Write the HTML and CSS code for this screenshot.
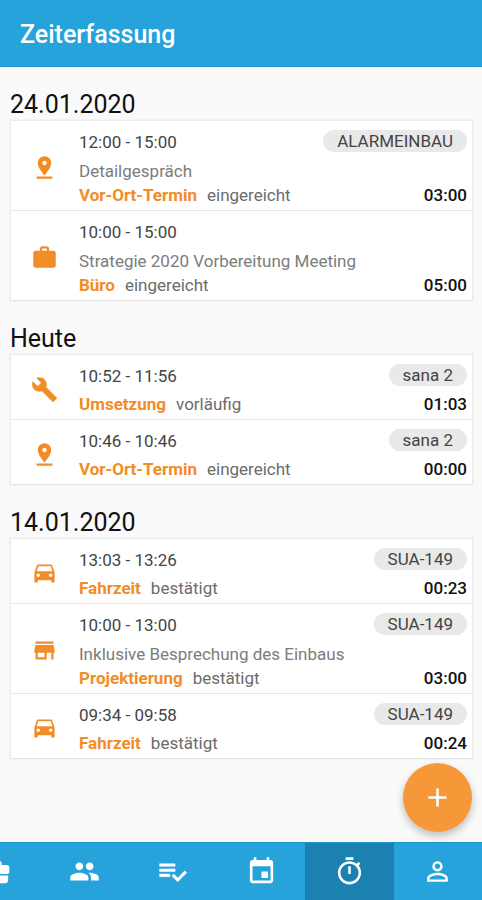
FILE: index.html
```html
<!DOCTYPE html>
<html lang="de">
<head>
<meta charset="utf-8">
<meta name="viewport" content="width=device-width, initial-scale=1">
<title>Zeiterfassung</title>
<link rel="stylesheet" href="styles.css">
</head>
<body>
<svg class="sprite" aria-hidden="true">
  <symbol id="pin" viewBox="0 0 24 24"><path d="M18 8c0-3.310-2.690-6-6-6S6 4.690 6 8c0 4.500 6 11 6 11s6-6.500 6-11zm-8 0c0-1.100.9-2 2-2s2 .9 2 2-.890 2-2 2c-1.100 0-2-.9-2-2zM5 20v2h14v-2H5z"/></symbol>
  <symbol id="work" viewBox="0 0 24 24"><path d="M20 6h-4V4c0-1.110-.890-2-2-2h-4c-1.110 0-2 .890-2 2v2H4c-1.110 0-1.990.890-1.990 2L2 19c0 1.110.890 2 2 2h16c1.110 0 2-.890 2-2V8c0-1.110-.890-2-2-2zm-6 0h-4V4h4v2z"/></symbol>
  <symbol id="build" viewBox="0 0 24 24"><path d="M22.700 19l-9.100-9.100c.9-2.300.4-5-1.500-6.900-2-2-5-2.400-7.400-1.300L9 6 6 9 1.600 4.700C.4 7.100.9 10.100 2.900 12.100c1.900 1.900 4.600 2.400 6.900 1.500l9.100 9.100c.4.4 1 .4 1.400 0l2.300-2.300c.5-.4.5-1.100.1-1.400z"/></symbol>
  <symbol id="car" viewBox="0 0 24 24"><path d="M18.920 5.010C18.720 4.420 18.160 4 17.500 4h-11c-.660 0-1.210.420-1.420 1.010L3 11v8c0 .550.450 1 1 1h1c.550 0 1-.450 1-1v-1h12v1c0 .550.450 1 1 1h1c.550 0 1-.450 1-1v-8l-2.080-5.990zM6.500 15c-.830 0-1.500-.670-1.500-1.500S5.670 12 6.500 12s1.500.670 1.500 1.500S7.330 15 6.500 15zm11 0c-.830 0-1.500-.670-1.500-1.500s.670-1.500 1.500-1.500 1.500.670 1.500 1.500-.670 1.500-1.500 1.500zM5 10l1.500-4.500h11L19 10H5z"/></symbol>
  <symbol id="store" viewBox="0 0 24 24"><path d="M20 4H4v2h16V4zm1 10v-2l-1-5H4l-1 5v2h1v6h10v-6h4v6h2v-6h1zm-9 4H6v-4h6v4z"/></symbol>
  <symbol id="case" viewBox="0 0 24 24"><path d="M10 16v-1H3.010L3 19c0 1.110.890 2 2 2h14c1.110 0 2-.890 2-2v-4h-7v1h-4zm10-9h-4.010V5l-2-2h-4l-2 2v2H4c-1.100 0-2 .9-2 2v3c0 1.110.890 2 2 2h6v-2h4v2h6c1.100 0 2-.9 2-2V9c0-1.100-.9-2-2-2zm-6 0h-4V5h4v2z"/></symbol>
  <symbol id="people" viewBox="0 0 24 24"><path d="M16 11c1.660 0 2.990-1.340 2.990-3S17.660 5 16 5c-1.660 0-3 1.340-3 3s1.340 3 3 3zm-8 0c1.660 0 2.990-1.340 2.990-3S9.660 5 8 5C6.340 5 5 6.340 5 8s1.340 3 3 3zm0 2c-2.330 0-7 1.170-7 3.500V19h14v-2.500c0-2.330-4.670-3.500-7-3.500zm8 0c-.290 0-.620.020-.970.050 1.160.840 1.970 1.970 1.970 3.450V19h6v-2.500c0-2.330-4.670-3.500-7-3.500z"/></symbol>
  <symbol id="tasks" viewBox="0 0 24 24"><path d="M14 10H2v2h12v-2zm0-4H2v2h12V6zM2 16h8v-2H2v2zm19.500-4.500L23 13l-6.990 7-4.510-4.500L13 14l3.010 3 5.490-5.500z" stroke="currentColor" stroke-width=".4"/></symbol>
  <symbol id="event" viewBox="0 0 24 24"><path d="M17 12h-5v5h5v-5zM16 1v2H8V1H6v2H5c-1.110 0-1.990.9-1.990 2L3 19c0 1.100.890 2 2 2h14c1.100 0 2-.9 2-2V5c0-1.100-.9-2-2-2h-1V1h-2zm3 18H5V8h14v11z"/></symbol>
  <symbol id="timer" viewBox="0 0 24 24"><path d="M15 1H9v2h6V1zm-4 13h2V8h-2v6zm8.030-6.610l1.420-1.420c-.430-.510-.9-.990-1.410-1.410l-1.420 1.420C16.070 4.740 14.120 4 12 4c-4.970 0-9 4.030-9 9s4.020 9 9 9 9-4.030 9-9c0-2.120-.740-4.070-1.970-5.610zM12 20c-3.870 0-7-3.130-7-7s3.130-7 7-7 7 3.130 7 7-3.130 7-7 7z"/></symbol>
  <symbol id="person" viewBox="0 0 24 24"><path d="M12 5.900c1.160 0 2.100.940 2.100 2.100s-.940 2.100-2.100 2.100S9.900 9.160 9.900 8s.940-2.100 2.100-2.100m0 9c2.970 0 6.100 1.460 6.100 2.100v1.100H5.900V17c0-.640 3.130-2.100 6.100-2.100M12 4C9.790 4 8 5.790 8 8s1.790 4 4 4 4-1.790 4-4-1.790-4-4-4zm0 9c-2.670 0-8 1.340-8 4v3h16v-3c0-2.660-5.330-4-8-4z"/></symbol>
  <symbol id="plus" viewBox="0 0 24 24"><path d="M19 13h-6v6h-2v-6H5v-2h6V5h2v6h6v2z"/></symbol>
</svg>

<header class="app-bar"><h1>Zeiterfassung</h1></header>

<main class="content">
  <section>
    <h2>24.01.2020</h2>
    <ul class="card">
      <li class="entry">
        <svg class="entry-icon"><use href="#pin"/></svg>
        <div class="entry-body">
          <div class="line top"><span class="span">12:00 - 15:00</span><span class="chip">ALARMEINBAU</span></div>
          <p class="note">Detailgespräch</p>
          <div class="line"><span class="kind">Vor-Ort-Termin</span><span class="state">eingereicht</span><span class="total">03:00</span></div>
        </div>
      </li>
      <li class="entry">
        <svg class="entry-icon"><use href="#work"/></svg>
        <div class="entry-body">
          <div class="line top"><span class="span">10:00 - 15:00</span></div>
          <p class="note">Strategie 2020 Vorbereitung Meeting</p>
          <div class="line"><span class="kind">Büro</span><span class="state">eingereicht</span><span class="total">05:00</span></div>
        </div>
      </li>
    </ul>
  </section>

  <section>
    <h2>Heute</h2>
    <ul class="card">
      <li class="entry">
        <svg class="entry-icon"><use href="#build"/></svg>
        <div class="entry-body">
          <div class="line top"><span class="span">10:52 - 11:56</span><span class="chip">sana 2</span></div>
          <div class="line"><span class="kind">Umsetzung</span><span class="state">vorläufig</span><span class="total">01:03</span></div>
        </div>
      </li>
      <li class="entry">
        <svg class="entry-icon"><use href="#pin"/></svg>
        <div class="entry-body">
          <div class="line top"><span class="span">10:46 - 10:46</span><span class="chip">sana 2</span></div>
          <div class="line"><span class="kind">Vor-Ort-Termin</span><span class="state">eingereicht</span><span class="total">00:00</span></div>
        </div>
      </li>
    </ul>
  </section>

  <section>
    <h2>14.01.2020</h2>
    <ul class="card">
      <li class="entry">
        <svg class="entry-icon"><use href="#car"/></svg>
        <div class="entry-body">
          <div class="line top"><span class="span">13:03 - 13:26</span><span class="chip">SUA-149</span></div>
          <div class="line"><span class="kind">Fahrzeit</span><span class="state">bestätigt</span><span class="total">00:23</span></div>
        </div>
      </li>
      <li class="entry">
        <svg class="entry-icon"><use href="#store"/></svg>
        <div class="entry-body">
          <div class="line top"><span class="span">10:00 - 13:00</span><span class="chip">SUA-149</span></div>
          <p class="note">Inklusive Besprechung des Einbaus</p>
          <div class="line"><span class="kind">Projektierung</span><span class="state">bestätigt</span><span class="total">03:00</span></div>
        </div>
      </li>
      <li class="entry">
        <svg class="entry-icon"><use href="#car"/></svg>
        <div class="entry-body">
          <div class="line top"><span class="span">09:34 - 09:58</span><span class="chip">SUA-149</span></div>
          <div class="line"><span class="kind">Fahrzeit</span><span class="state">bestätigt</span><span class="total">00:24</span></div>
        </div>
      </li>
    </ul>
  </section>
</main>

<button class="fab" type="button" aria-label="Neuer Eintrag"><svg><use href="#plus"/></svg></button>

<nav class="tabs">
  <a href="#projekte" aria-label="Projekte"><svg><use href="#case"/></svg></a>
  <a href="#kontakte" aria-label="Kontakte"><svg><use href="#people"/></svg></a>
  <a href="#aufgaben" aria-label="Aufgaben"><svg><use href="#tasks"/></svg></a>
  <a href="#kalender" aria-label="Kalender"><svg><use href="#event"/></svg></a>
  <a href="#zeiten" aria-label="Zeiterfassung" aria-current="page"><svg><use href="#timer"/></svg></a>
  <a href="#profil" aria-label="Profil"><svg><use href="#person"/></svg></a>
</nav>
</body>
</html>
```
FILE: styles.css
```css
* {
  box-sizing: border-box;
}

body {
  margin: 0;
  min-height: 100vh;
  display: flex;
  flex-direction: column;
  background: #fafafa;
  color: #444;
  font: 17px/24px Roboto, sans-serif;
}

h1, h2, p, ul {
  margin: 0;
  padding: 0;
}

svg {
  display: block;
  fill: currentColor;
}

.sprite {
  display: none;
}

.app-bar {
  padding: 19px 20px 15px;
  background: #25a3da;
  border-bottom: 1px solid #1995cc;
  color: #fff;
}

.app-bar h1 {
  font-size: 25px;
  line-height: 32px;
  font-weight: 500;
}

.content {
  flex: 1;
  padding: 0 9px 0 10px;
}

h2 {
  padding-top: 23px;
  font-size: 25px;
  line-height: 30px;
  font-weight: 400;
  color: #111;
}

.card {
  list-style: none;
  background: #fff;
  border: 1px solid #ececec;
  border-bottom: 0;
  box-shadow: 0 0 1px 1px #f3f3f3;
}

.entry {
  display: flex;
  align-items: center;
  padding: 9px 5px 3px 0;
  border-bottom: 1px solid #e6e6e6;
}

.entry-icon {
  flex: none;
  width: 27px;
  height: 27px;
  margin: 0 21px 2px 20px;
  color: #f28c26;
}

.entry-body {
  flex: 1;
  min-width: 0;
}

.line {
  display: flex;
  gap: 10px;
}

.top {
  margin-bottom: 4px;
}

.chip {
  margin-left: auto;
  padding: 0 14px;
  border-radius: 11px;
  line-height: 22px;
  height: 22px;
  background: #e9e9e9;
  color: #444;
}

.note {
  padding-top: 1px;
  color: #7c7c7c;
}

.kind {
  font-weight: 700;
  color: #f28c26;
}

.state {
  color: #6c6c6c;
}

.total {
  margin-left: auto;
  font-weight: 500;
  color: #111;
}

.fab {
  position: fixed;
  right: 10px;
  bottom: 68px;
  width: 69px;
  height: 69px;
  padding: 0;
  display: grid;
  place-items: center;
  border: 0;
  border-radius: 50%;
  background: #f69838;
  color: #fff;
  box-shadow: 0 4px 8px rgba(0, 0, 0, .25);
}

.fab svg {
  width: 31px;
  height: 31px;
}

.tabs {
  position: sticky;
  bottom: 0;
  display: flex;
  justify-content: flex-end;
  overflow: hidden;
  background: #25a3da;
  border-top: 1px solid #1995cc;
}

.tabs a {
  flex: none;
  width: calc(100% * 11 / 60);
  height: 57px;
  display: grid;
  place-items: center;
  color: #fff;
}

.tabs a[aria-current] {
  background: #1a81b0;
}

.tabs svg {
  width: 31px;
  height: 31px;
}
```
